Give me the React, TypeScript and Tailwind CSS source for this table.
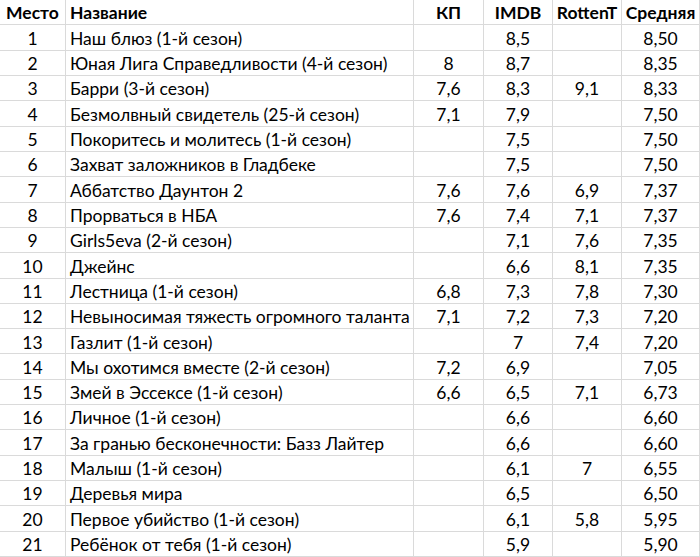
import { FC } from 'react';

type Row = [string, string, string, string, string, string];

const rows: Row[] = [
  ['1', 'Наш блюз (1-й сезон)', '', '8,5', '', '8,50'],
  ['2', 'Юная Лига Справедливости (4-й сезон)', '8', '8,7', '', '8,35'],
  ['3', 'Барри (3-й сезон)', '7,6', '8,3', '9,1', '8,33'],
  ['4', 'Безмолвный свидетель (25-й сезон)', '7,1', '7,9', '', '7,50'],
  ['5', 'Покоритесь и молитесь (1-й сезон)', '', '7,5', '', '7,50'],
  ['6', 'Захват заложников в Гладбеке', '', '7,5', '', '7,50'],
  ['7', 'Аббатство Даунтон 2', '7,6', '7,6', '6,9', '7,37'],
  ['8', 'Прорваться в НБА', '7,6', '7,4', '7,1', '7,37'],
  ['9', 'Girls5eva (2-й сезон)', '', '7,1', '7,6', '7,35'],
  ['10', 'Джейнс', '', '6,6', '8,1', '7,35'],
  ['11', 'Лестница (1-й сезон)', '6,8', '7,3', '7,8', '7,30'],
  ['12', 'Невыносимая тяжесть огромного таланта', '7,1', '7,2', '7,3', '7,20'],
  ['13', 'Газлит (1-й сезон)', '', '7', '7,4', '7,20'],
  ['14', 'Мы охотимся вместе (2-й сезон)', '7,2', '6,9', '', '7,05'],
  ['15', 'Змей в Эссексе (1-й сезон)', '6,6', '6,5', '7,1', '6,73'],
  ['16', 'Личное (1-й сезон)', '', '6,6', '', '6,60'],
  ['17', 'За гранью бесконечности: Базз Лайтер', '', '6,6', '', '6,60'],
  ['18', 'Малыш (1-й сезон)', '', '6,1', '7', '6,55'],
  ['19', 'Деревья мира', '', '6,5', '', '6,50'],
  ['20', 'Первое убийство (1-й сезон)', '', '6,1', '5,8', '5,95'],
  ['21', 'Ребёнок от тебя (1-й сезон)', '', '5,9', '', '5,90'],
];

const header: Row = ['Место', 'Название', 'КП', 'IMDB', 'RottenT', 'Средняя'];

const cell = 'flex items-center justify-center border-r border-b border-[#dadada] pt-[2px] whitespace-nowrap overflow-hidden';

const TableRow: FC<{ row: Row; bold?: boolean }> = ({ row, bold }) => (
  <>
    {row.map((value, i) => (
      <div
        key={i}
        className={
          i === 1
            ? `${cell} justify-start pl-[4px] ${bold ? 'font-bold' : ''}`
            : `${cell} ${bold ? 'font-bold' : ''}`
        }
      >
        {value}
      </div>
    ))}
  </>
);

const App: FC = () => {
  return (
    <div className="h-[557px] w-[700px] overflow-hidden bg-white text-[17.5px] leading-none text-black [font-family:Lato,'Open_Sans',sans-serif]">
      <div className="grid h-[557px] grid-cols-[66px_348px_70px_69px_69px_78px] grid-rows-[repeat(22,minmax(0,1fr))]">
        <TableRow row={header} bold />
        {rows.map((row) => (
          <TableRow key={row[0]} row={row} />
        ))}
      </div>
    </div>
  );
};

export default App;
